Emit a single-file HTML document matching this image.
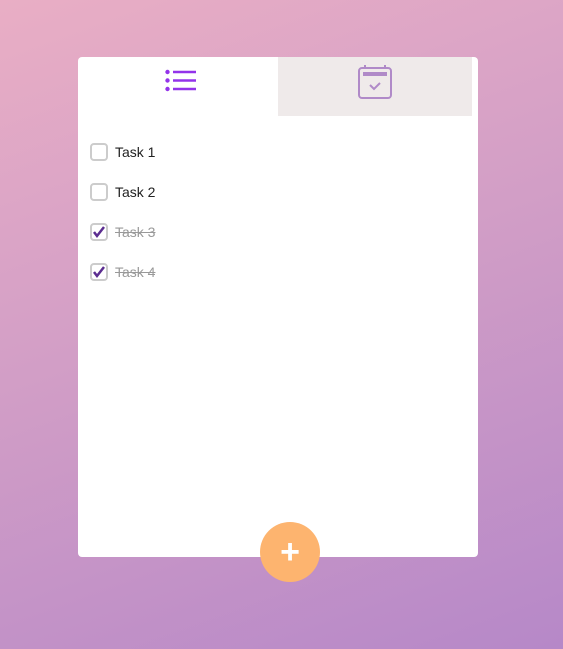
<!DOCTYPE html>
<html><head><style>
body{margin:0;width:563px;height:649px;overflow:hidden;background:linear-gradient(160deg,#e9aec5 0%,#d29ec6 45%,#b688c8 100%);font-family:"Liberation Sans",sans-serif;position:relative}
.card{position:absolute;left:78px;top:57px;width:400px;height:500px;background:#fff;border-radius:4px;overflow:hidden}
.tab2{position:absolute;left:200px;top:0;width:194px;height:59px;background:#efeaea}
.item{position:absolute;left:12px;height:18px;display:flex;align-items:center;font-size:14px;color:#222}
.cb{width:14px;height:14px;border:2px solid #ccc;border-radius:4px;margin-right:7px;position:relative}
.done{color:#999;text-decoration:line-through}
.fab{position:absolute;left:260px;top:522px;width:60px;height:60px;border-radius:50%;background:#fdb46f;color:#fff;font-size:34px;font-weight:bold;text-align:center;line-height:60px}
</style></head><body>
<div class="card">
<svg style="position:absolute;left:86px;top:12px" width="34" height="24" viewBox="0 0 34 24"><g fill="#9333ea"><circle cx="3.5" cy="3" r="2.2"/><circle cx="3.5" cy="11.5" r="2.2"/><circle cx="3.5" cy="20" r="2.2"/></g><g stroke="#9333ea" stroke-width="2.5"><line x1="9" y1="3" x2="32" y2="3"/><line x1="9" y1="11.5" x2="32" y2="11.5"/><line x1="9" y1="20" x2="32" y2="20"/></g></svg>
<div class="tab2"><svg style="position:absolute;left:80px;top:8px" width="34" height="34" viewBox="0 0 34 34"><rect x="1" y="3" width="32" height="30" rx="3" fill="none" stroke="#b08ac8" stroke-width="2"/><line x1="7" y1="0" x2="7" y2="4" stroke="#b08ac8" stroke-width="2"/><line x1="27" y1="0" x2="27" y2="4" stroke="#b08ac8" stroke-width="2"/><rect x="5" y="7" width="24" height="4" fill="#b08ac8"/><path d="M12 20l4 4 6-6" fill="none" stroke="#b08ac8" stroke-width="2"/></svg></div>
<div class="item" style="top:86px"><div class="cb"></div>Task 1</div>
<div class="item" style="top:126px"><div class="cb"></div>Task 2</div>
<div class="item" style="top:166px"><div class="cb"><svg width="14" height="14" style="position:absolute;left:0;top:0"><path d="M2 7l3 4 7-9" fill="none" stroke="#5b2d90" stroke-width="2.5"/></svg></div><span class="done">Task 3</span></div>
<div class="item" style="top:206px"><div class="cb"><svg width="14" height="14" style="position:absolute;left:0;top:0"><path d="M2 7l3 4 7-9" fill="none" stroke="#5b2d90" stroke-width="2.5"/></svg></div><span class="done">Task 4</span></div>
</div>
<div class="fab">+</div>
</body></html>
